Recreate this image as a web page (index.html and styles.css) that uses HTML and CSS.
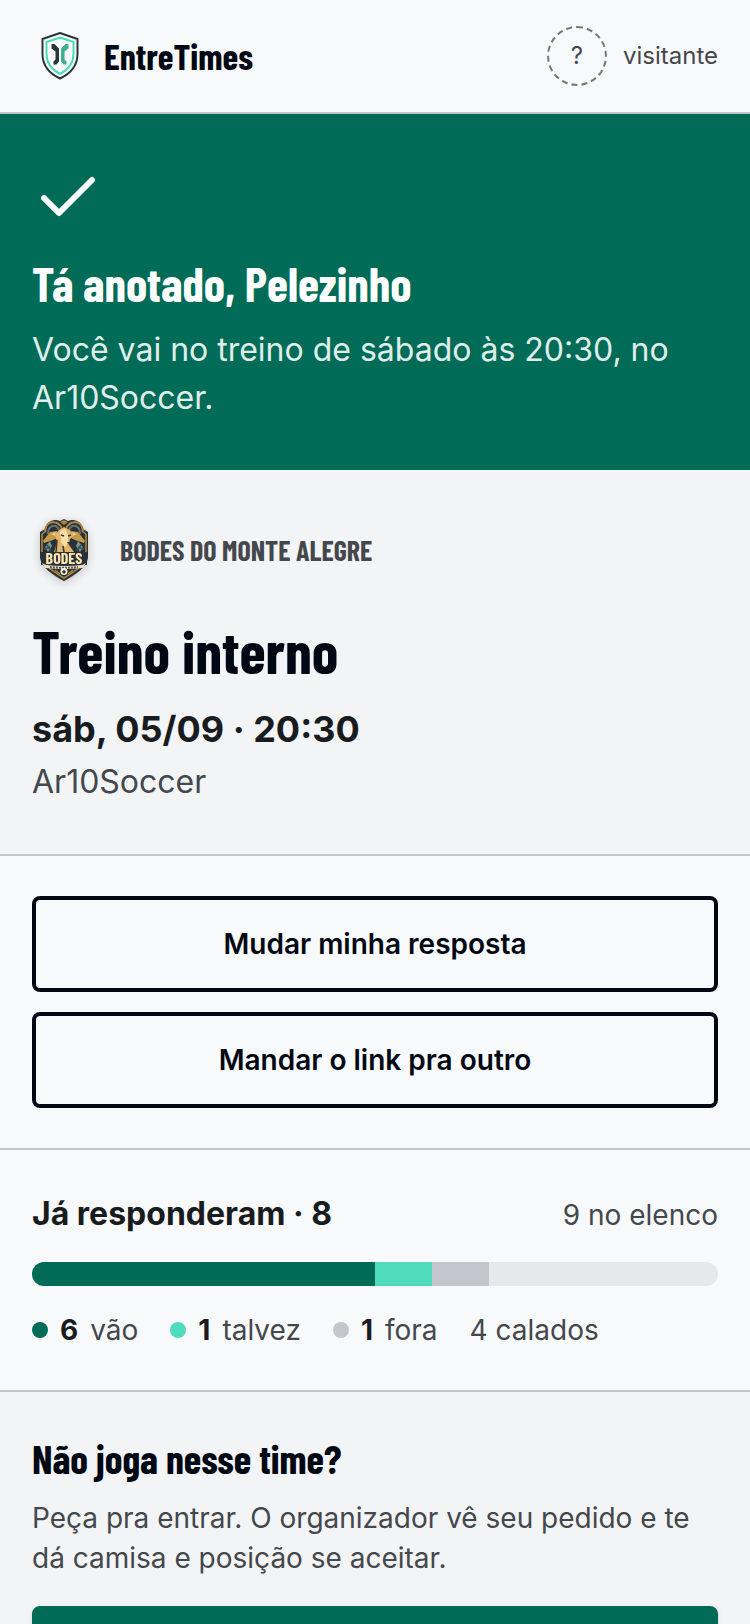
FILE: index.html
```html
<!DOCTYPE html>
<html lang="pt-BR">
<head>
<meta charset="utf-8">
<meta name="viewport" content="width=device-width, initial-scale=1">
<title>EntreTimes</title>
<link rel="stylesheet" href="styles.css">
</head>
<body>
<div class="page">
  <header class="topbar">
    <div class="brand">
      <svg class="brand-logo" viewBox="0 0 56 56" aria-hidden="true">
        <path d="M28 5 L45.500 11 V26 C45.500 38 37.500 46 28 50.500 C18.500 46 10.500 38 10.500 26 V11 Z" fill="#fbfdfd" stroke="#27363b" stroke-width="2" stroke-linejoin="round"/>
        <path d="M28 9.500 L41.500 14 V26 C41.500 35.500 35.500 42 28 46 C20.500 42 14.500 35.500 14.500 26 V14 Z" fill="none" stroke="#4adbb9" stroke-width="2"/>
        <path d="M19.500 16 H22.500 L27 20.500 V33.500 L24.500 36.500 H21.500 V33.500 L23.500 31.500 V23.500 L19.500 20.500 Z" fill="#27363b"/>
        <path d="M36.500 16 H33.500 L29 20.500 V33.500 L31.500 36.500 H34.500 V33.500 L32.500 31.500 V23.500 L36.500 20.500 Z" fill="#41ae97"/>
      </svg>
      <span class="brand-name">EntreTimes</span>
    </div>
    <div class="visitor">
      <span class="avatar">?</span>
      <span>visitante</span>
    </div>
  </header>

  <main>
    <section class="confirm">
      <svg class="check" viewBox="0 0 24 24" aria-hidden="true">
        <path d="M4 12l5 5L20 6" fill="none" stroke="currentColor" stroke-width="2" stroke-linecap="round" stroke-linejoin="round"/>
      </svg>
      <h1 class="confirm-title">Tá anotado, Pelezinho</h1>
      <p class="confirm-text">Você vai no treino de sábado às 20:30, no Ar10Soccer.</p>
    </section>

    <section class="event">
      <div class="team">
        <svg class="crest" viewBox="0 0 64 64" aria-hidden="true">
          <path d="M8 14 L13 11 C14 4 21 0 28 3 L32 1 L36 3 C43 0 50 4 51 11 L56 14 V40 C55 49 43 57 32 63 C21 57 9 49 8 40 Z" fill="#28303a"/>
          <path d="M10 16 L14 13 M54 16 L50 13 M10 16 V39 C11 47 22 54 32 60 C42 54 53 47 54 39 V16" fill="none" stroke="#b78a35" stroke-width="1.500"/>
          <path d="M13 14 C13 2 27 1 30 11 M51 14 C51 2 37 1 34 11" fill="none" stroke="#b4873a" stroke-width="2"/>
          <path d="M16 16 C16 7 24 5 27 12 M48 16 C48 7 40 5 37 12" fill="none" stroke="#69716f" stroke-width="2"/>
          <path d="M28 4 L32 2 L36 4 L32 7 Z" fill="#a88440"/>
          <path d="M11 23 L18 14 L25 13 L27 19 L21 22 L12 25 Z M53 23 L46 14 L39 13 L37 19 L43 22 L52 25 Z" fill="#c49a48"/>
          <path d="M19 16 L24 14 L23 18 Z M45 16 L40 14 L41 18 Z" fill="#f0cd8d"/>
          <path d="M13 29 L18 23 L20 28 L16 34 Z M51 29 L46 23 L44 28 L48 34 Z" fill="#879091"/>
          <path d="M15 27 L19 33 M49 27 L45 33 M12 31 L18 29 M52 31 L46 29" stroke="#245c59" stroke-width="1.500"/>
          <path d="M27 12 L32 9 L38 12 L41 18 L38 21 L37 27 L42 34 H22 L25 24 L23 17 Z" fill="#dfb66b"/>
          <path d="M28 13 L33 11 L36 17 L36 25 L33 29 L29 24 Z" fill="#f9dda3"/>
          <path d="M25 22 L24 34 M31 28 L32 34 M39 26 L43 33 M29 17 L32 18 M36 18 L39 17" stroke="#30343a" stroke-width="1.500"/>
          <path d="M35 24 L39 24 L37 27 Z" fill="#30343a"/>
          <path d="M9 34 H55 V47 H9 Z" fill="#28303a"/>
          <text class="crest-name" x="32" y="46" text-anchor="middle">BODES</text>
          <path d="M14 47 Q32 49 50 47 L54 45 L51 50 Q32 52 13 50 L10 45 Z" fill="#eee2bf"/>
          <path d="M18 49 Q32 50.500 46 49" fill="none" stroke="#505861" stroke-width="2" stroke-dasharray="2 1"/>
          <circle cx="32" cy="53.500" r="3.500" fill="#f7f2df"/>
          <path d="M32 52 L34 53.500 L33 55.500 H31 L30 53.500 Z" fill="#28303a"/>
          <path d="M23 52 L28 56 M41 52 L36 56" stroke="#b78a35" stroke-width="1.500"/>
        </svg>
        <span class="team-name">BODES DO MONTE ALEGRE</span>
      </div>
      <h2 class="event-title">Treino interno</h2>
      <p class="event-date">sáb, 05/09 · 20:30</p>
      <p class="event-place">Ar10Soccer</p>
    </section>

    <section class="actions">
      <button class="button" type="button">Mudar minha resposta</button>
      <button class="button" type="button">Mandar o link pra outro</button>
    </section>

    <section class="answers">
      <div class="answers-head">
        <h2 class="answers-title">Já responderam · 8</h2>
        <span>9 no elenco</span>
      </div>
      <div class="bar">
        <span class="going" style="width:50%"></span>
        <span class="maybe" style="width:8.333%"></span>
        <span class="out" style="width:8.333%"></span>
      </div>
      <ul class="legend">
        <li><i class="dot going"></i><b>6</b><span>vão</span></li>
        <li><i class="dot maybe"></i><b>1</b><span>talvez</span></li>
        <li><i class="dot out"></i><b>1</b><span>fora</span></li>
        <li>4 calados</li>
      </ul>
    </section>

    <section class="join">
      <h2 class="join-title" id="join-title">Não joga nesse time?</h2>
      <p class="join-text">Peça pra entrar. O organizador vê seu pedido e te dá camisa e posição se aceitar.</p>
      <button class="button button-solid" type="button" aria-labelledby="join-title"></button>
    </section>
  </main>
</div>
</body>
</html>
```
FILE: styles.css
```css
* { box-sizing: border-box; }

body {
  margin: 0;
  background: #f8f9fb;
  color: #191c1e;
  font-family: Inter, "Liberation Sans", sans-serif;
  font-size: 28px;
  line-height: 40px;
}

h1, h2, p, ul { margin: 0; padding: 0; }

.page { height: 100vh; overflow: hidden; }

.brand-name, .confirm-title, .team-name, .event-title, .join-title {
  font-family: "Barlow Condensed", "Liberation Sans Narrow", "Liberation Sans", sans-serif;
  font-weight: 700;
}

.topbar {
  display: flex;
  align-items: center;
  justify-content: space-between;
  padding: 26px 32px;
  border-bottom: 2px solid #c5c6cd;
}

.brand, .visitor { display: flex; align-items: center; gap: 16px; }
.brand-logo { width: 56px; height: 56px; }
.brand-name { font-size: 36px; color: #000814; }
.visitor { font-size: 24px; color: #44474c; }

.avatar {
  display: flex;
  align-items: center;
  justify-content: center;
  width: 60px;
  height: 60px;
  border: 2px dashed #75777c;
  border-radius: 50%;
}

.confirm { padding: 48px 32px; background: #006c58; color: #fff; }
.check { display: block; width: 72px; height: 72px; }
.confirm-title { margin: 24px 0 18px; font-size: 48px; line-height: 50px; }
.confirm-text { font-size: 32px; line-height: 48px; color: #e0eeeb; }

.event { padding: 48px 32px; background: #f2f4f6; border-bottom: 2px solid #c5c6cd; }
.team { display: flex; align-items: center; gap: 24px; color: #44474c; }
.crest { width: 64px; height: 64px; filter: drop-shadow(0 2px 4px #00000033); }
.crest-name { font: 700 16px "Barlow Condensed", "Liberation Sans Narrow", sans-serif; fill: #ffe7ad; }
.team-name { font-size: 28px; }
.event-title { margin: 32px 0 18px; font-size: 60px; line-height: 72px; color: #000814; }
.event-date { margin-bottom: 4px; font-size: 36px; line-height: 50px; font-weight: 700; }
.event-place { font-size: 32px; line-height: 48px; color: #44474c; }

.actions {
  display: flex;
  flex-direction: column;
  gap: 20px;
  padding: 40px 32px;
  border-bottom: 2px solid #c5c6cd;
}

.button {
  min-height: 96px;
  border: 4px solid #000814;
  border-radius: 8px;
  background: transparent;
  color: #000814;
  font: 600 28px/40px Inter, "Liberation Sans", sans-serif;
}

.answers { padding: 40px 32px; color: #44474c; border-bottom: 2px solid #c5c6cd; }
.answers-head { display: flex; align-items: baseline; justify-content: space-between; }
.answers-title { font-size: 32px; line-height: 48px; color: #191c1e; }

.bar {
  display: flex;
  height: 24px;
  margin: 24px 0;
  border-radius: 12px;
  overflow: hidden;
  background: #e6e8ea;
}

.going { background: #006c58; }
.maybe { background: #4fdcbc; }
.out { background: #c5c6cd; }

.legend { display: flex; flex-wrap: wrap; gap: 32px; list-style: none; }
.legend li { display: flex; align-items: center; gap: 12px; }
.legend b { color: #191c1e; }
.dot { width: 16px; height: 16px; border-radius: 50%; }

.join { padding: 40px 32px; background: #f2f4f6; }
.join-title { margin-bottom: 14px; font-size: 40px; line-height: 52px; color: #000814; }
.join-text { margin-bottom: 28px; color: #44474c; }
.button-solid {
  width: 100%;
  border-color: #006c58;
  background: #006c58;
  box-shadow: 0 2px 4px #00000022;
}
```
